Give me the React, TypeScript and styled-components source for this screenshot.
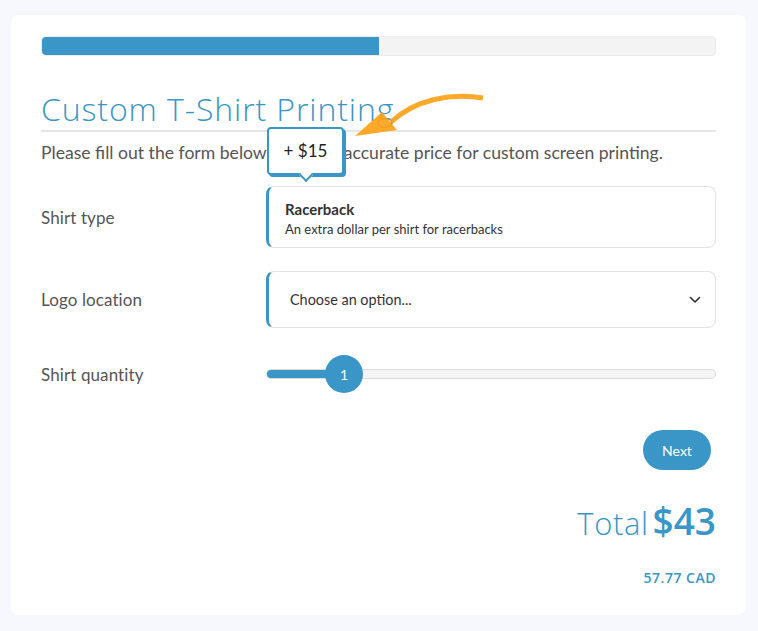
import React from "react";
import styled, { createGlobalStyle } from "styled-components";

const blue = "#3a96c6";

const GlobalStyle = createGlobalStyle`
  html, body {
    margin: 0;
    padding: 0;
    background: #f7f8fd;
  }
  body {
    font-family: "Lato", "Noto Sans", sans-serif;
    color: #555;
  }
`;

const Page = styled.div`
  padding: 15px 12px 16px 11px;
`;

const Card = styled.div`
  background: #fff;
  border-radius: 8px;
  padding: 21px 30px 28px 30px;
  display: flex;
  flex-direction: column;
`;

const Progress = styled.div`
  height: 20px;
  border-radius: 4px;
  background: #f3f3f3;
  border: 1px solid #ececec;
  box-sizing: border-box;
  overflow: hidden;
`;

const ProgressFill = styled.div`
  height: 100%;
  background: ${blue};
  border-radius: 4px 0 0 4px;
`;

const Heading = styled.h1`
  margin: 33px 0 0 0;
  font-family: "Open Sans", sans-serif;
  font-weight: 300;
  font-size: 32px;
  line-height: 40px;
  color: ${blue};
  letter-spacing: 0.9px;
  padding-bottom: 1px;
  border-bottom: 2px solid #e6e6e6;
`;

const Intro = styled.div`
  position: relative;
  margin-top: 10px;
  font-size: 17.6px;
  line-height: 22px;
  color: #555;
`;

const Tooltip = styled.div`
  position: absolute;
  left: 226px;
  top: -15px;
  width: 77px;
  height: 48px;
  box-sizing: border-box;
  background: #fff;
  border: 2px solid ${blue};
  border-radius: 4px;
  box-shadow: 2px 2px 0 ${blue};
  display: flex;
  align-items: center;
  justify-content: center;
  font-size: 17px;
  color: #222;
  z-index: 2;

  &::after {
    content: "";
    position: absolute;
    left: 32px;
    bottom: -7px;
    width: 8px;
    height: 8px;
    background: #fff;
    border-right: 2px solid ${blue};
    border-bottom: 2px solid ${blue};
    transform: rotate(45deg);
  }
`;

const Pointer = styled.svg`
  position: absolute;
  left: 310px;
  top: -57px;
  z-index: 3;
  pointer-events: none;
`;

const Form = styled.div`
  display: flex;
  flex-direction: column;
  margin-top: 22px;
`;

const Row = styled.div<{ $gap?: number }>`
  display: grid;
  grid-template-columns: 225px 1fr;
  align-items: center;
  margin-bottom: ${(p) => p.$gap ?? 22}px;
`;

const Label = styled.div`
  font-size: 17px;
  color: #555;
  letter-spacing: 0.1px;
`;

const Choice = styled.div`
  height: 62px;
  box-sizing: border-box;
  border: 1px solid #e3e3e3;
  border-left: 3px solid ${blue};
  border-radius: 8px;
  padding: 13px 16px 0 16px;
  display: flex;
  flex-direction: column;
  gap: 3px;
`;

const ChoiceTitle = styled.div`
  font-size: 15px;
  font-weight: 700;
  color: #333;
`;

const ChoiceText = styled.div`
  font-size: 13px;
  color: #333;
`;

const Select = styled.div`
  height: 57px;
  box-sizing: border-box;
  border: 1px solid #e3e3e3;
  border-left: 3px solid ${blue};
  border-radius: 8px;
  padding: 0 14px 0 21px;
  display: flex;
  align-items: center;
  justify-content: space-between;
  font-size: 14.4px;
  color: #333;
`;

const Slider = styled.div`
  position: relative;
  height: 40px;
  display: flex;
  align-items: center;
`;

const Track = styled.div`
  flex: 1;
  height: 10px;
  border-radius: 5px;
  background: #f5f5f5;
  border: 1px solid #dcdcdc;
  box-sizing: border-box;
  overflow: hidden;
`;

const TrackFill = styled.div`
  height: 100%;
  background: ${blue};
`;

const Thumb = styled.div`
  position: absolute;
  top: 1px;
  width: 38px;
  height: 38px;
  border-radius: 50%;
  background: ${blue};
  color: #fff;
  font-size: 14px;
  display: flex;
  align-items: center;
  justify-content: center;
`;

const Actions = styled.div`
  display: flex;
  justify-content: flex-end;
  margin-top: 36px;
  padding-right: 5px;
`;

const NextButton = styled.button`
  width: 68px;
  height: 40px;
  border: none;
  border-radius: 20px;
  background: ${blue};
  color: #fff;
  font-family: "Lato", sans-serif;
  font-size: 14px;
  cursor: pointer;
`;

const Total = styled.div`
  margin-top: 25px;
  display: flex;
  justify-content: flex-end;
  align-items: baseline;
  gap: 4px;
  font-family: "Open Sans", sans-serif;
  color: ${blue};
`;

const TotalLabel = styled.span`
  font-size: 31px;
  font-weight: 300;
  letter-spacing: 0.6px;
`;

const TotalValue = styled.span`
  font-size: 37px;
  font-weight: 600;
`;

const Converted = styled.div`
  margin-top: 22px;
  text-align: right;
  font-family: "Open Sans", sans-serif;
  font-weight: 600;
  font-size: 14px;
  letter-spacing: 0.5px;
  color: ${blue};
`;

const Chevron = () => (
  <svg width="12" height="8" viewBox="0 0 12 8" fill="none">
    <path d="M1.5 1.5 L6 6 L10.5 1.5" stroke="#333" strokeWidth="1.6" strokeLinecap="round" strokeLinejoin="round" />
  </svg>
);

export default function App() {
  const progress = 50;
  const quantity = 1;
  const sliderPos = 78;

  return (
    <>
      <GlobalStyle />
      <Page>
        <Card>
          <Progress>
            <ProgressFill style={{ width: `${progress}%` }} />
          </Progress>

          <Heading>Custom T-Shirt Printing</Heading>

          <Intro>
            Please fill out the form below to get an accurate price for custom screen printing.
            <Tooltip>+ $15</Tooltip>
            <Pointer width="140" height="70" viewBox="0 0 140 70">
              <path
                d="M132 13 C100 8 65 14 40 37"
                stroke="rgba(255,160,20,0.9)"
                strokeWidth="5"
                fill="none"
              />
              <path d="M4 51 L31 27 L46 45 Z" fill="rgba(255,160,20,0.9)" />
            </Pointer>
          </Intro>

          <Form>
            <Row $gap={23}>
              <Label>Shirt type</Label>
              <Choice>
                <ChoiceTitle>Racerback</ChoiceTitle>
                <ChoiceText>An extra dollar per shirt for racerbacks</ChoiceText>
              </Choice>
            </Row>
            <Row $gap={26}>
              <Label>Logo location</Label>
              <Select>
                <span>Choose an option...</span>
                <Chevron />
              </Select>
            </Row>
            <Row $gap={0}>
              <Label>Shirt quantity</Label>
              <Slider>
                <Track>
                  <TrackFill style={{ width: `${sliderPos}px` }} />
                </Track>
                <Thumb style={{ left: `${sliderPos - 19}px` }}>{quantity}</Thumb>
              </Slider>
            </Row>
          </Form>

          <Actions>
            <NextButton>Next</NextButton>
          </Actions>

          <Total>
            <TotalLabel>Total</TotalLabel>
            <TotalValue>$43</TotalValue>
          </Total>
          <Converted>57.77 CAD</Converted>
        </Card>
      </Page>
    </>
  );
}
